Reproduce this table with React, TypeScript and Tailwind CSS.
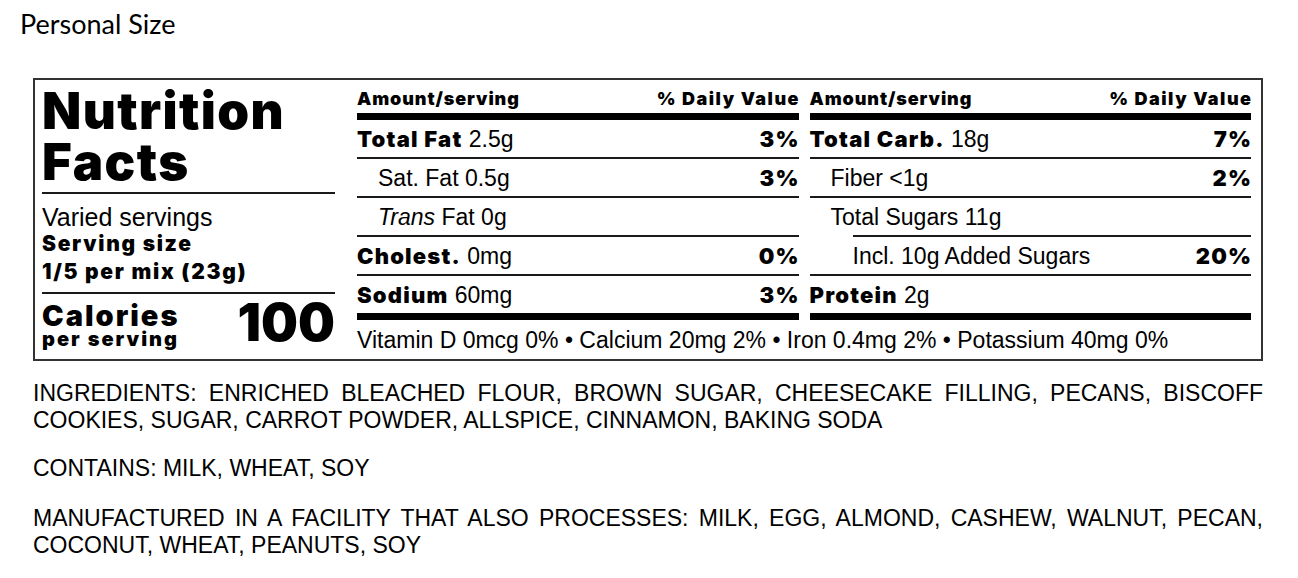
const heavy = "font-['Inter',sans-serif] font-black";
const reg = "font-['Liberation_Sans',Arial,sans-serif]";

type Row = {
  label: string;
  bold?: boolean;
  italicLead?: string;
  amount: string;
  dv?: string;
  indent?: 0 | 1 | 2;
  lineIndent?: boolean;
};

const left: Row[] = [
  { label: "Total Fat", bold: true, amount: "2.5g", dv: "3%" },
  { label: "Sat. Fat", amount: "0.5g", dv: "3%", indent: 1 },
  { label: "Fat", italicLead: "Trans", amount: "0g", indent: 1 },
  { label: "Cholest.", bold: true, amount: "0mg", dv: "0%" },
  { label: "Sodium", bold: true, amount: "60mg", dv: "3%" },
];

const right: Row[] = [
  { label: "Total Carb.", bold: true, amount: "18g", dv: "7%" },
  { label: "Fiber", amount: "<1g", dv: "2%", indent: 1 },
  { label: "Total Sugars", amount: "11g", indent: 1 },
  { label: "Incl. 10g Added Sugars", amount: "", dv: "20%", indent: 2, lineIndent: true },
  { label: "Protein", bold: true, amount: "2g" },
];

function NutrientRow({ r }: { r: Row }) {
  const pad = r.indent === 2 ? "pl-[43px]" : r.indent === 1 ? "pl-[21px]" : "";
  return (
    <div className={`h-[37px] flex items-center justify-between text-[23px] leading-[28px] ${pad}`}>
      <span className="whitespace-nowrap">
        {r.italicLead && <span className={`${reg} italic`}>{r.italicLead} </span>}
        <span className={r.bold ? `${heavy} text-[22px] tracking-[1.2px]` : reg}>{r.label}</span>
        {r.amount && <span className={reg}> {r.amount}</span>}
      </span>
      {r.dv && (
        <span className={`${heavy} text-[22px] tracking-[1.2px] -mr-[1.2px]`}>{r.dv}</span>
      )}
    </div>
  );
}

function Column({ rows }: { rows: Row[] }) {
  return (
    <div className="flex flex-col">
      <div className={`${heavy} text-[18px] leading-[20px] flex justify-between`}>
        <span className="tracking-[0.9px]">Amount/serving</span>
        <span className="tracking-[1.5px] -mr-[1.5px]">% Daily Value</span>
      </div>
      <div className="mt-[4px] h-[7px] bg-black" />
      {rows.map((r, i) => (
        <div key={r.label}>
          <NutrientRow r={r} />
          {i < rows.length - 1 && (
            <div className={`h-[2px] bg-[#1a1a1a] ${rows[i + 1].lineIndent ? "ml-[43px]" : ""}`} />
          )}
        </div>
      ))}
      <div className="h-[7px] bg-black" />
    </div>
  );
}

export default function App() {
  return (
    <div className="w-[1298px] h-[578px] bg-white text-black overflow-hidden">
      <div className="pl-[20px] pt-[8px] text-[27px] leading-[32px] font-['Lato',sans-serif]">
        Personal Size
      </div>

      <div className="ml-[33px] mt-[38px] w-[1230px] border-2 border-[#333] flex pl-[7px] pr-[10px]">
        <div className="w-[293px] flex flex-col pt-[5px]">
          <h1 className={`${heavy} text-[51px] leading-[51px] tracking-[1.4px]`}>
            <span className="block">Nutrition</span>
            <span className="block">Facts</span>
          </h1>
          <div className="mt-[5px] h-[2px] bg-[#1a1a1a]" />
          <div className={`${reg} mt-[10px] text-[25px] leading-[26px]`}>Varied servings</div>
          <div className={`${heavy} text-[21px] leading-[28px] tracking-[1.7px]`}>
            <span className="block">Serving size</span>
            <span className="block">1/5 per mix (23g)</span>
          </div>
          <div className="mt-[6px] h-[2px] bg-[#1a1a1a]" />
          <div className="flex items-end justify-between pt-[4px]">
            <div className={`${heavy} flex flex-col`}>
              <span className="text-[29px] leading-[28px] tracking-[2px]">Calories</span>
              <span className="text-[20px] leading-[18px] tracking-[2px]">per serving</span>
            </div>
            <span className={`${heavy} text-[52px] leading-[50px]`}>100</span>
          </div>
        </div>

        <div className="ml-[22px] flex-1 flex flex-col pt-[9px] pb-[7px]">
          <div className="grid grid-cols-2 gap-[11px]">
            <Column rows={left} />
            <Column rows={right} />
          </div>
          <div className={`${reg} mt-[8px] text-[23px] leading-[24px]`}>
            Vitamin D 0mcg 0% • Calcium 20mg 2% • Iron 0.4mg 2% • Potassium 40mg 0%
          </div>
        </div>
      </div>

      <div className={`${reg} ml-[33px] w-[1230px] text-[23px] leading-[27px] mt-[19px]`}>
        <p>
          <span className="block text-justify [text-align-last:justify]">
            INGREDIENTS: ENRICHED BLEACHED FLOUR, BROWN SUGAR, CHEESECAKE FILLING, PECANS, BISCOFF
          </span>
          <span className="block">COOKIES, SUGAR, CARROT POWDER, ALLSPICE, CINNAMON, BAKING SODA</span>
        </p>
        <p className="mt-[21px]">CONTAINS: MILK, WHEAT, SOY</p>
        <p className="mt-[23px]">
          <span className="block text-justify [text-align-last:justify]">
            MANUFACTURED IN A FACILITY THAT ALSO PROCESSES: MILK, EGG, ALMOND, CASHEW, WALNUT, PECAN,
          </span>
          <span className="block">COCONUT, WHEAT, PEANUTS, SOY</span>
        </p>
      </div>
    </div>
  );
}
